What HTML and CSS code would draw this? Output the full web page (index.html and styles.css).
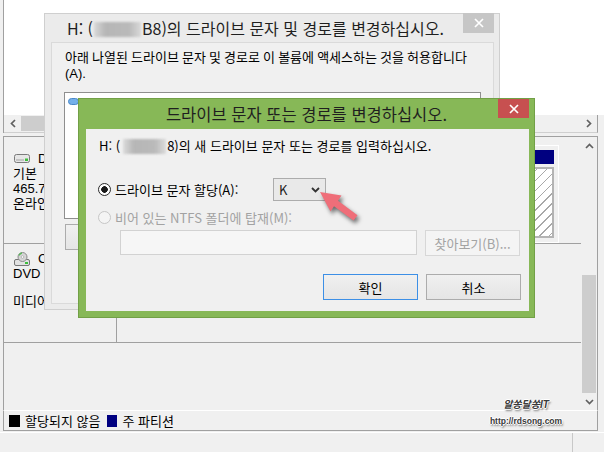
FILE: index.html
```html
<!DOCTYPE html>
<html lang="ko">
<head>
<meta charset="utf-8">
<title>디스크 관리</title>
<link rel="stylesheet" href="styles.css">
</head>
<body>
<div class="dm">
  <div class="top">
    <div class="vol-list"></div>
    <div class="hscroll">
      <div class="sbtn"><svg width="6" height="9" viewBox="0 0 6 9"><polyline class="chev" points="5,1 1.5,4.5 5,8"/></svg></div>
      <div class="hthumb"></div>
      <div class="track"></div>
      <div class="sbtn"><svg width="6" height="9" viewBox="0 0 6 9"><polyline class="chev" points="1,1 4.5,4.5 1,8"/></svg></div>
    </div>
  </div>

  <div class="bottom">
    <div class="disks">
      <div class="row row1">
        <div class="dlabel l1">
          <div class="dl-line">
            <svg class="dl-ico" width="16" height="9" viewBox="0 0 16 9"><rect x="0.5" y="0.5" width="15" height="8" rx="2" fill="#e6e6e6" stroke="#7a7a7a"/><rect x="2" y="5" width="8" height="2" fill="#c4c4c4"/><rect x="11" y="4.5" width="3" height="2.5" fill="#3cbf3c"/></svg>
            <span>Disk 0</span>
          </div>
          <div class="dl-line">기본</div>
          <div class="dl-line">465.76 GB</div>
          <div class="dl-line">온라인</div>
        </div>
        <div class="pcell">
          <div class="part"><div class="phead"></div><div class="pbody"></div></div>
        </div>
      </div>
      <div class="row row2">
        <div class="dlabel l2">
          <div class="dl-line">
            <svg class="dl-ico" width="16" height="14" viewBox="0 0 16 14"><rect x="0.5" y="7.5" width="15" height="6" rx="1.5" fill="#e2e2e2" stroke="#777"/><circle cx="8.5" cy="5" r="4.5" fill="#d6d6d6" stroke="#8a8a8a"/><path d="M5 3.5 A4 4 0 0 1 8 1" fill="none" stroke="#5cb85c" stroke-width="1.4"/><circle cx="8.5" cy="5" r="1.3" fill="#fff" stroke="#999" stroke-width="0.6"/><rect x="11" y="10" width="3" height="2" fill="#3cbf3c"/></svg>
            <span>CD-ROM 0</span>
          </div>
          <div class="dl-line">DVD (E:)</div>
          <div class="dl-line dl-gap">미디어 없음</div>
        </div>
        <div class="pcell"></div>
      </div>
    </div>
    <div class="vscroll">
      <div class="sbtn"><svg width="9" height="6" viewBox="0 0 9 6"><polyline class="chev" points="1,5 4.5,1.5 8,5"/></svg></div>
      <div class="vspace"></div>
      <div class="vthumb"></div>
      <div class="sbtn"><svg width="9" height="6" viewBox="0 0 9 6"><polyline class="chev" points="1,1 4.5,4.5 8,1"/></svg></div>
    </div>
  </div>

  <div class="legend">
    <span class="sw sw-black"></span><span>할당되지 않음</span>
    <span class="sw sw-navy"></span><span>주 파티션</span>
  </div>
  <div class="status"><div class="st-main"></div><div class="st-cell"></div></div>

  <div class="dlg dlg1">
    <div class="tbar">
      <div class="ttl">H: (<span class="redact r1"></span>B8)의 드라이브 문자 및 경로를 변경하십시오.</div>
      <div class="xbtn"><svg width="10" height="10" viewBox="0 0 10 10"><path d="M1 1 L9 9 M9 1 L1 9" stroke="#fff" stroke-width="1.7"/></svg></div>
    </div>
    <div class="client1">
      <div class="desc">아래 나열된 드라이브 문자 및 경로로 이 볼륨에 액세스하는 것을 허용합니다<br>(A).</div>
      <div class="paths">
        <svg width="11" height="7" viewBox="0 0 11 7"><rect x="0.5" y="0.5" width="10" height="6" rx="3" fill="#74b0ea" stroke="#4a88c8"/></svg>
      </div>
      <div class="btn addbtn">추가(D)...</div>
    </div>
  </div>

  <div class="dlg dlg2">
    <div class="tbar">
      <div class="ttl">드라이브 문자 또는 경로를 변경하십시오.</div>
      <div class="xbtn"><svg width="10" height="10" viewBox="0 0 10 10"><path d="M1 1 L9 9 M9 1 L1 9" stroke="#fff" stroke-width="1.7"/></svg></div>
    </div>
    <div class="client2">
      <div class="intro">H: (<span class="redact r2"></span>8)의 새 드라이브 문자 또는 경로를 입력하십시오.</div>
      <div class="opt opt1">
        <span class="radio on"></span>
        <span class="optlabel">드라이브 문자 할당(A):</span>
        <div class="combo"><span>K</span><svg width="9" height="6" viewBox="0 0 9 6"><polyline points="1,1 4.5,4.5 8,1" fill="none" stroke="#333" stroke-width="1.8"/></svg></div>
      </div>
      <div class="opt opt2">
        <span class="radio off"></span>
        <span>비어 있는 NTFS 폴더에 탑재(M):</span>
      </div>
      <div class="pathrow">
        <div class="pathfield"></div>
        <div class="btn dis">찾아보기(B)...</div>
      </div>
      <div class="actions">
        <div class="btn def">확인</div>
        <div class="btn">취소</div>
      </div>
    </div>
  </div>

  <svg class="pointer" width="62" height="46" viewBox="0 0 62 46"><polygon points="10,7 31.5,10.5 28,15.8 47.5,30.2 43.5,35.6 24,21.2 20.5,26.5" fill="#ef6e79"/></svg>

  <div class="wmark">
    <div class="wm1">알쏭달쏭IT</div>
    <div class="wm2">http://rdsong.com</div>
  </div>
</div>
</body>
</html>
```

FILE: styles.css
```css
* { box-sizing: border-box; }
html, body { margin: 0; padding: 0; }
body {
  width: 604px; height: 452px; overflow: hidden;
  background: #f0f0f0;
  font-family: "Noto Sans CJK KR", "Noto Sans", sans-serif;
  font-size: 13px; color: #000;
}
.dm { position: relative; width: 604px; height: 452px; display: flex; flex-direction: column; background: #f0f0f0; }

/* upper volume list */
.top { flex: none; height: 133px; margin-left: 3px; border-left: 1px solid #a0a0a0; display: flex; flex-direction: column; }
.vol-list { flex: none; height: 115px; background: #fff; }
.hscroll { flex: none; height: 18px; width: 594px; display: flex; align-items: center; background: #f0f0f0; border-right: 1px solid #a0a0a0; border-bottom: 1px solid #cfcfcf; }
.sbtn { flex: none; width: 17px; height: 17px; display: flex; align-items: center; justify-content: center; }
.vscroll .sbtn { width: 16px; }
.chev { fill: none; stroke: #606060; stroke-width: 1.7; }
.hthumb { flex: none; width: 400px; height: 15px; background: #cdcdcd; }
.track { flex: 1; }

/* lower disk pane */
.bottom { flex: none; height: 274px; margin: 3px 6px 0 3px; border: 1px solid #a0a0a0; border-bottom: none; display: flex; }
.disks { flex: none; width: 577px; display: flex; flex-direction: column; }
.row { flex: none; display: flex; border-bottom: 1px solid #a0a0a0; }
.row1 { height: 107px; }
.row2 { height: 98px; margin-top: 1px; }
.dlabel { flex: none; width: 113px; border-right: 1px solid #a0a0a0; padding-left: 9px; white-space: nowrap; overflow: hidden; font-family: "Liberation Sans", "Noto Sans CJK KR", sans-serif; }
.l1 { padding-top: 14px; }
.l2 { padding-top: 6px; }
.dl-line { height: 15px; line-height: 15px; display: flex; align-items: center; gap: 8px; }
.dl-ico { flex: none; margin-left: 1px; }
.dl-gap { margin-top: 13px; }
.pcell { flex: 1; display: flex; justify-content: flex-end; padding: 8px 22px 0 0; }
.part { width: 140px; border: 1px solid #fff; border-left: none; padding: 4px 4px 4px 0; display: flex; flex-direction: column; }
.phead { flex: none; height: 14px; background: #000080; }
.pbody { flex: 1; margin-top: 3px; border: 2px solid #b4b4b4; border-left: none; background: repeating-linear-gradient(135deg, #fff 0 6px, #a8a8a8 6px 7px); }
.vscroll { flex: none; width: 16px; display: flex; flex-direction: column; align-items: center; }
.vspace { flex: none; height: 121px; }
.vthumb { flex: none; width: 14px; height: 118px; background: #cdcdcd; }

/* legend + status */
.legend { flex: none; height: 21px; margin: 0 6px 0 3px; border-left: 1px solid #a0a0a0; border-right: 1px solid #a0a0a0; border-top: 1px solid #fff; border-bottom: 1px solid #a0a0a0; display: flex; align-items: center; padding-left: 5px; white-space: nowrap; line-height: 16px; }
.sw { flex: none; width: 11px; height: 12px; margin-right: 5px; }
.sw-black { background: #000; }
.sw-navy { width: 10px; background: #000080; margin-left: 7px; }
.status { flex: 1; display: flex; border-top: 1px solid #fff; margin-top: 1px; }
.st-main { width: 572px; }
.st-cell { flex: 1; border-left: 1px solid #c8c8c8; }

/* dialogs (windows over the console) */
.dlg { position: absolute; display: flex; flex-direction: column; }
.tbar { flex: none; display: grid; align-items: center; }
.ttl { font-size: 16.5px; line-height: 20px; color: #1f1f1f; white-space: nowrap; }
.xbtn { align-self: start; width: 31px; height: 20px; display: flex; align-items: center; justify-content: center; }
.redact { display: inline-block; vertical-align: middle; height: 15px; background: linear-gradient(90deg, rgba(190,190,190,0.4), #b6b6b6 25%, #bababa 75%, rgba(190,190,190,0.4)); filter: blur(1px); }
.r1 { width: 47px; margin: -2px 1px 0 1px; }
.r2 { width: 43px; margin: -2px 1px 0 3px; }

.dlg1 { left: 44px; top: 13px; width: 456px; height: 297px; background: #ebebeb; border: 1px solid #cfcfcf; }
.dlg1 .tbar { height: 28px; grid-template-columns: 1fr auto; }
.dlg1 .ttl { padding-left: 22px; font-size: 16px; }
.dlg1 .xbtn { background: #c6c6c6; margin-right: 5px; margin-top: -1px; }
.client1 { flex: 1; margin: 0 5px 5px 6px; background: #f0f0f0; border: 1px solid #dadada; padding: 7px 0 0 13px; }
.desc { line-height: 16px; white-space: nowrap; font-family: "Liberation Sans", "Noto Sans CJK KR", sans-serif; word-spacing: -0.5px; }
.paths { margin: 10px 0 0 -1px; width: 417px; height: 127px; background: #fff; border: 1px solid #8f8f8f; padding: 5px 3px; line-height: 0; }
.addbtn { margin-top: 5px; width: 75px; height: 27px; }

.dlg2 { left: 78px; top: 98px; width: 457px; height: 220px; background: #87b857; border: 1px solid #72a046; }
.dlg2 .tbar { height: 30px; grid-template-columns: 1fr auto 1fr; }
.dlg2 .ttl { grid-column: 2; }
.dlg2 .xbtn { grid-column: 3; justify-self: end; background: #c75050; margin-right: 5px; height: 19px; }
.client2 { flex: 1; margin: 0 5px 6px 7px; background: #f0f0f0; padding: 9px 8px 0 13px; display: flex; flex-direction: column; }
.intro { line-height: 16px; white-space: nowrap; }
.opt { flex: none; display: flex; align-items: center; white-space: nowrap; }
.opt1 { height: 23px; margin-top: 24px; }
.opt2 { height: 16px; margin-top: 8px; color: #a2a2a2; }
.radio { flex: none; width: 13px; height: 13px; border-radius: 50%; margin-left: -1px; margin-right: 4px; }
.radio.on { border: 1px solid #2b2b2b; background: radial-gradient(circle, #1a1a1a 0 3px, #fff 3.6px); }
.radio.off { border: 1px solid #c6c6c6; background: #f4f4f4; }
.optlabel { flex: none; width: 158px; }
.combo { flex: none; width: 53px; height: 23px; border: 1px solid #acacac; background: #e9e9e9; display: flex; align-items: center; justify-content: space-between; padding: 0 5px 0 5px; color: #222; }
.pathrow { flex: none; display: flex; margin-top: 5px; height: 26px; }
.pathfield { flex: none; margin-left: 21px; width: 297px; height: 25px; border: 1px solid #d2d2d2; background: #f6f6f6; }
.btn { flex: none; width: 95px; height: 26px; display: flex; align-items: center; justify-content: center; border: 1px solid #acacac; background: linear-gradient(#f0f0f0, #e5e5e5); white-space: nowrap; }
.btn.dis { margin-left: 8px; color: #a3a3a3; border-color: #d7d7d7; background: #f4f4f4; }
.btn.def { border-color: #3c8fe6; }
.actions { flex: none; display: flex; justify-content: flex-end; gap: 8px; margin-top: 18px; }

/* annotation overlays */
.pointer { position: absolute; left: 310px; top: 185px; filter: drop-shadow(2px 3px 2px rgba(0,0,0,0.55)); }
.wmark { position: absolute; left: 484px; top: 398px; width: 84px; text-align: center; font-family: "Liberation Sans", "Noto Sans CJK KR", sans-serif; font-weight: bold; color: #3a3a3a; text-shadow: 1px 0 0 #fff, -1px 0 0 #fff, 0 1px 0 #fff, 0 -1px 0 #fff, 1px 2px 2px #666; }
.wm1 { font-size: 10px; line-height: 14px; font-style: italic; }
.wm2 { font-size: 8.5px; line-height: 12px; margin-top: 3px; }
```
